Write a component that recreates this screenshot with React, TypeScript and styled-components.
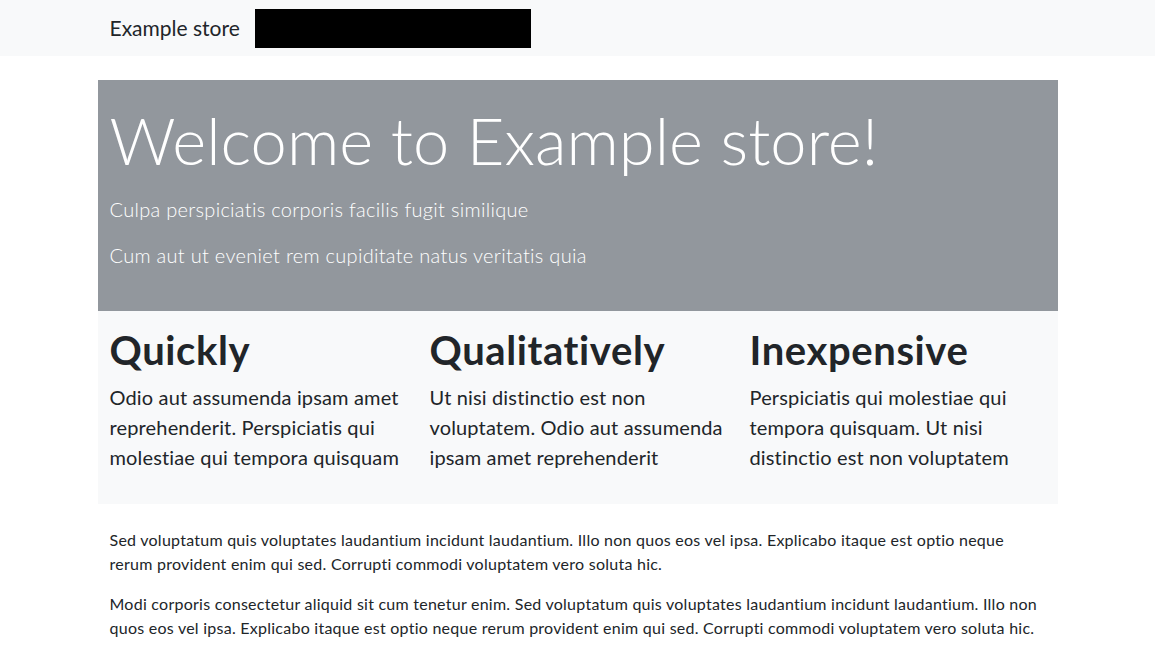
import React from 'react';
import styled, { createGlobalStyle } from 'styled-components';

const GlobalStyle = createGlobalStyle`
  * {
    box-sizing: border-box;
  }

  body {
    margin: 0;
    font-family: Lato, "Noto Sans", sans-serif;
    color: #212529;
    background: #fff;
  }
`;

const features = [
  {
    title: 'Quickly',
    text: 'Odio aut assumenda ipsam amet reprehenderit. Perspiciatis qui molestiae qui tempora quisquam',
  },
  {
    title: 'Qualitatively',
    text: 'Ut nisi distinctio est non voluptatem. Odio aut assumenda ipsam amet reprehenderit',
  },
  {
    title: 'Inexpensive',
    text: 'Perspiciatis qui molestiae qui tempora quisquam. Ut nisi distinctio est non voluptatem',
  },
];

const App: React.FC = () => {
  return (
    <>
      <GlobalStyle />
      <Navbar>
        <NavInner>
          <Brand>Example store</Brand>
          <Redacted />
        </NavInner>
      </Navbar>

      <Hero>
        <HeroTitle>Welcome to Example store!</HeroTitle>
        <Lead>Culpa perspiciatis corporis facilis fugit similique</Lead>
        <Lead>Cum aut ut eveniet rem cupiditate natus veritatis quia</Lead>
      </Hero>

      <Features>
        {features.map((f) => (
          <Feature key={f.title}>
            <FeatureTitle>{f.title}</FeatureTitle>
            <FeatureText>{f.text}</FeatureText>
          </Feature>
        ))}
      </Features>

      <Content>
        <Paragraph>
          Sed voluptatum quis voluptates laudantium incidunt laudantium. Illo non quos eos vel ipsa.
          Explicabo itaque est optio neque rerum provident enim qui sed. Corrupti commodi voluptatem
          vero soluta hic.
        </Paragraph>
        <Paragraph>
          Modi corporis consectetur aliquid sit cum tenetur enim. Sed voluptatum quis voluptates
          laudantium incidunt laudantium. Illo non quos eos vel ipsa. Explicabo itaque est optio neque
          rerum provident enim qui sed. Corrupti commodi voluptatem vero soluta hic.
        </Paragraph>
      </Content>
    </>
  );
};

export default App;

const Navbar = styled.nav`
  background-color: #f8f9fa;
  height: 56px;
  display: flex;
  align-items: center;
`;

const NavInner = styled.div`
  width: 960px;
  margin: 0 auto;
  padding: 0 12px;
  display: flex;
  align-items: center;
`;

const Brand = styled.span`
  font-size: 21px;
  margin-right: 15px;
  color: #212529;
  position: relative;
  top: -1px;
`;

const Redacted = styled.div`
  width: 276px;
  height: 39px;
  background: #000;
`;

const Hero = styled.section`
  width: 960px;
  margin: 24px auto 0;
  padding: 24px 12px 25px;
  background-color: #92979d;
  color: #fff;
`;

const HeroTitle = styled.h1`
  font-size: 65px;
  font-weight: 300;
  line-height: 72px;
  margin: 0 0 18px;
`;

const Lead = styled.p`
  font-size: 20px;
  font-weight: 300;
  line-height: 30px;
  letter-spacing: 0.3px;
  margin: 0 0 16px;
`;

const Features = styled.section`
  width: 960px;
  margin: 0 auto;
  padding: 16px 0;
  background-color: #f8f9fa;
  display: grid;
  grid-template-columns: repeat(3, 1fr);
`;

const Feature = styled.div`
  padding: 0 12px;
`;

const FeatureTitle = styled.h2`
  font-size: 40px;
  font-weight: 700;
  line-height: 47px;
  letter-spacing: 0.6px;
  margin: 0 0 8px;
`;

const FeatureText = styled.p`
  font-size: 20px;
  font-weight: 400;
  line-height: 30px;
  letter-spacing: 0.15px;
  margin: 0 0 16px;
`;

const Content = styled.section`
  width: 960px;
  margin: 24px auto 0;
  padding: 0 12px;
`;

const Paragraph = styled.p`
  font-size: 16px;
  line-height: 24px;
  letter-spacing: 0.25px;
  margin: 0 0 16px;
`;
